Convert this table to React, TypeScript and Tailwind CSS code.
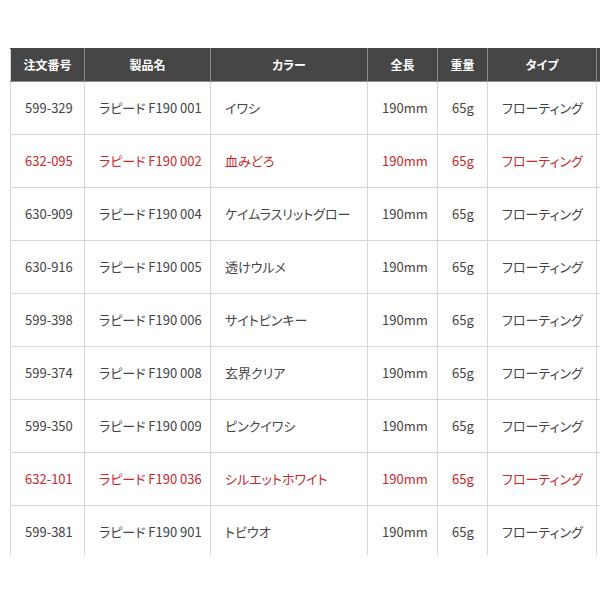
import React from "react";

const rows: { no: string; name: string; color: string; red?: boolean }[] = [
  { no: "599-329", name: "ラピード F190 001", color: "イワシ" },
  { no: "632-095", name: "ラピード F190 002", color: "血みどろ", red: true },
  { no: "630-909", name: "ラピード F190 004", color: "ケイムラスリットグロー" },
  { no: "630-916", name: "ラピード F190 005", color: "透けウルメ" },
  { no: "599-398", name: "ラピード F190 006", color: "サイトピンキー" },
  { no: "599-374", name: "ラピード F190 008", color: "玄界クリア" },
  { no: "599-350", name: "ラピード F190 009", color: "ピンクイワシ" },
  { no: "632-101", name: "ラピード F190 036", color: "シルエットホワイト", red: true },
  { no: "599-381", name: "ラピード F190 901", color: "トビウオ" },
];

const heads = ["注文番号", "製品名", "カラー", "全長", "重量", "タイプ", ""];
const widths = ["w-[74px]", "w-[126px]", "w-[157px]", "w-[70px]", "w-[50px]", "w-[109px]", "w-[100px]"];

export default function App() {
  return (
    <div
      className="w-[600px] h-[600px] overflow-hidden bg-white [font-feature-settings:'palt']"
      style={{ fontFamily: '"Noto Sans CJK JP", "Noto Sans", sans-serif' }}
    >
      <div className="pt-[48px] pl-[10px]">
        <div className="h-[507px] w-[590px] overflow-hidden">
          <table className="border-collapse table-fixed w-[686px] text-[13px]">
            <colgroup>
              {widths.map((w, i) => (
                <col key={i} className={w} />
              ))}
            </colgroup>
            <thead>
              <tr className="h-[33px] bg-[#464646]">
                {heads.map((h, i) => (
                  <th
                    key={i}
                    className="border border-[#8a8a8a] border-t-[#464646] border-l-[#464646] first:border-l-[#d6d6d6] text-white text-[12px] font-bold text-center p-0"
                  >
                    {h}
                  </th>
                ))}
              </tr>
            </thead>
            <tbody>
              {rows.map((r, i) => {
                const c = r.red ? "text-[#c9282d]" : "text-[#444444]";
                const cells = [r.no, r.name, r.color, "190mm", "65g", "フローティング", ""];
                return (
                  <tr key={i} className="h-[53px]">
                    {cells.map((v, j) => (
                      <td
                        key={j}
                        className={`border border-[#d6d6d6] pl-[14px] pr-0 py-0 text-left whitespace-nowrap ${c}`}
                      >
                        {v}
                      </td>
                    ))}
                  </tr>
                );
              })}
            </tbody>
          </table>
        </div>
      </div>
    </div>
  );
}
